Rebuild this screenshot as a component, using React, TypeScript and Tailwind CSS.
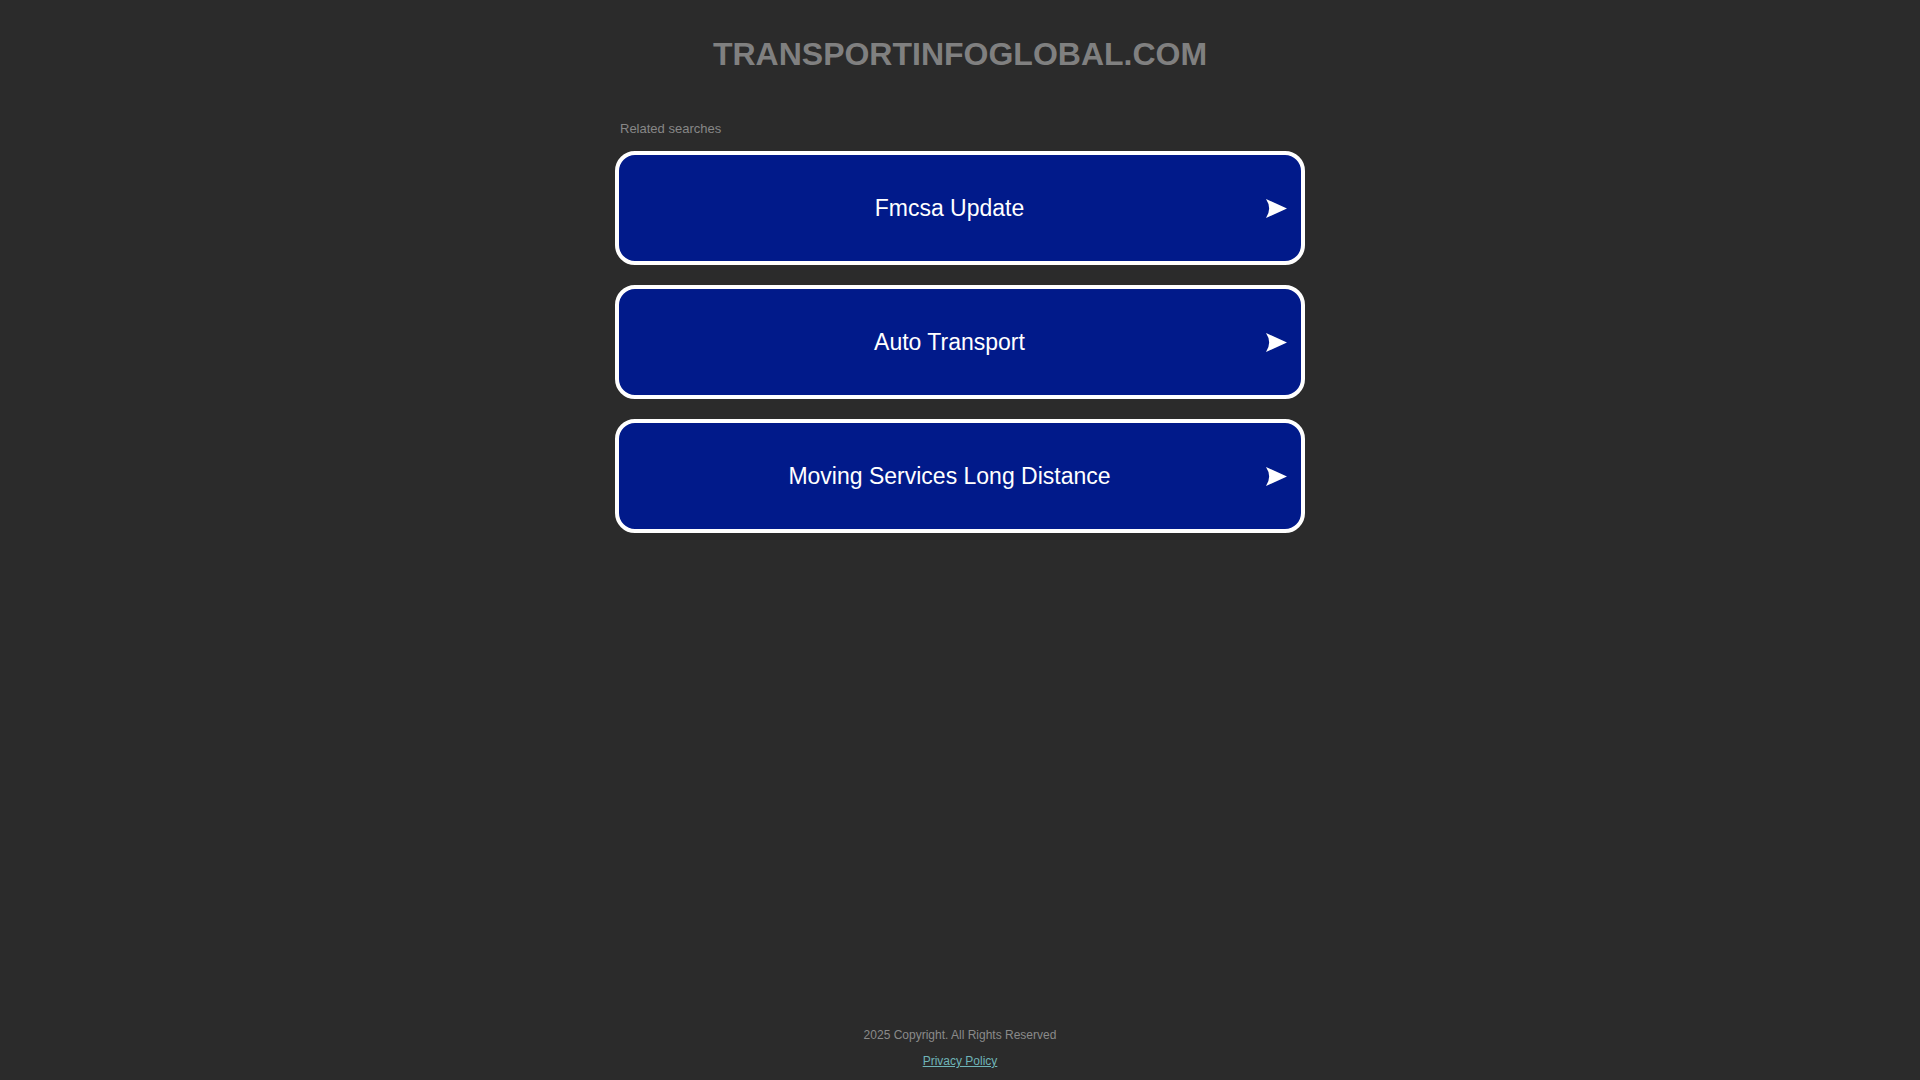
const searches = ['Fmcsa Update', 'Auto Transport', 'Moving Services Long Distance'];

function Arrow() {
  return (
    <svg width="21" height="19" viewBox="0 0 20 18" className="shrink-0">
      <path d="M0 0 L20 9 L0 18 Q6 9 0 0 Z" fill="#ffffff" />
    </svg>
  );
}

export default function App() {
  return (
    <div
      className="min-h-screen flex flex-col bg-[#2b2b2b]"
      style={{ fontFamily: '"Liberation Sans", Arial, sans-serif' }}
    >
      {/* Domain title */}
      <h1 className="mt-[36px] text-center text-[32px] leading-[37px] font-bold text-[#808080]">
        TRANSPORTINFOGLOBAL.COM
      </h1>

      {/* Related searches */}
      <div className="w-[690px] mx-auto mt-[48px]">
        <p className="pl-[5px] text-[13px] leading-[15px] text-[#878787]">Related searches</p>
        <div className="mt-[15px] flex flex-col gap-[20px]">
          {searches.map(s => (
            <a
              key={s}
              href="#"
              className="h-[114px] flex items-center pl-[14px] pr-[14px] rounded-[20px] border-4 border-white bg-[#011a8a] text-white"
            >
              <span className="flex-1 text-center text-[23px] leading-[27px]">{s}</span>
              <Arrow />
            </a>
          ))}
        </div>
      </div>

      {/* Footer */}
      <footer className="mt-auto pb-[12px] flex flex-col items-center gap-[12px] text-[12px] leading-[14px]">
        <p className="text-[#8a8a8a]">2025 Copyright. All Rights Reserved</p>
        <a href="#" className="underline text-[#6fb4b8]">Privacy Policy</a>
      </footer>
    </div>
  );
}
